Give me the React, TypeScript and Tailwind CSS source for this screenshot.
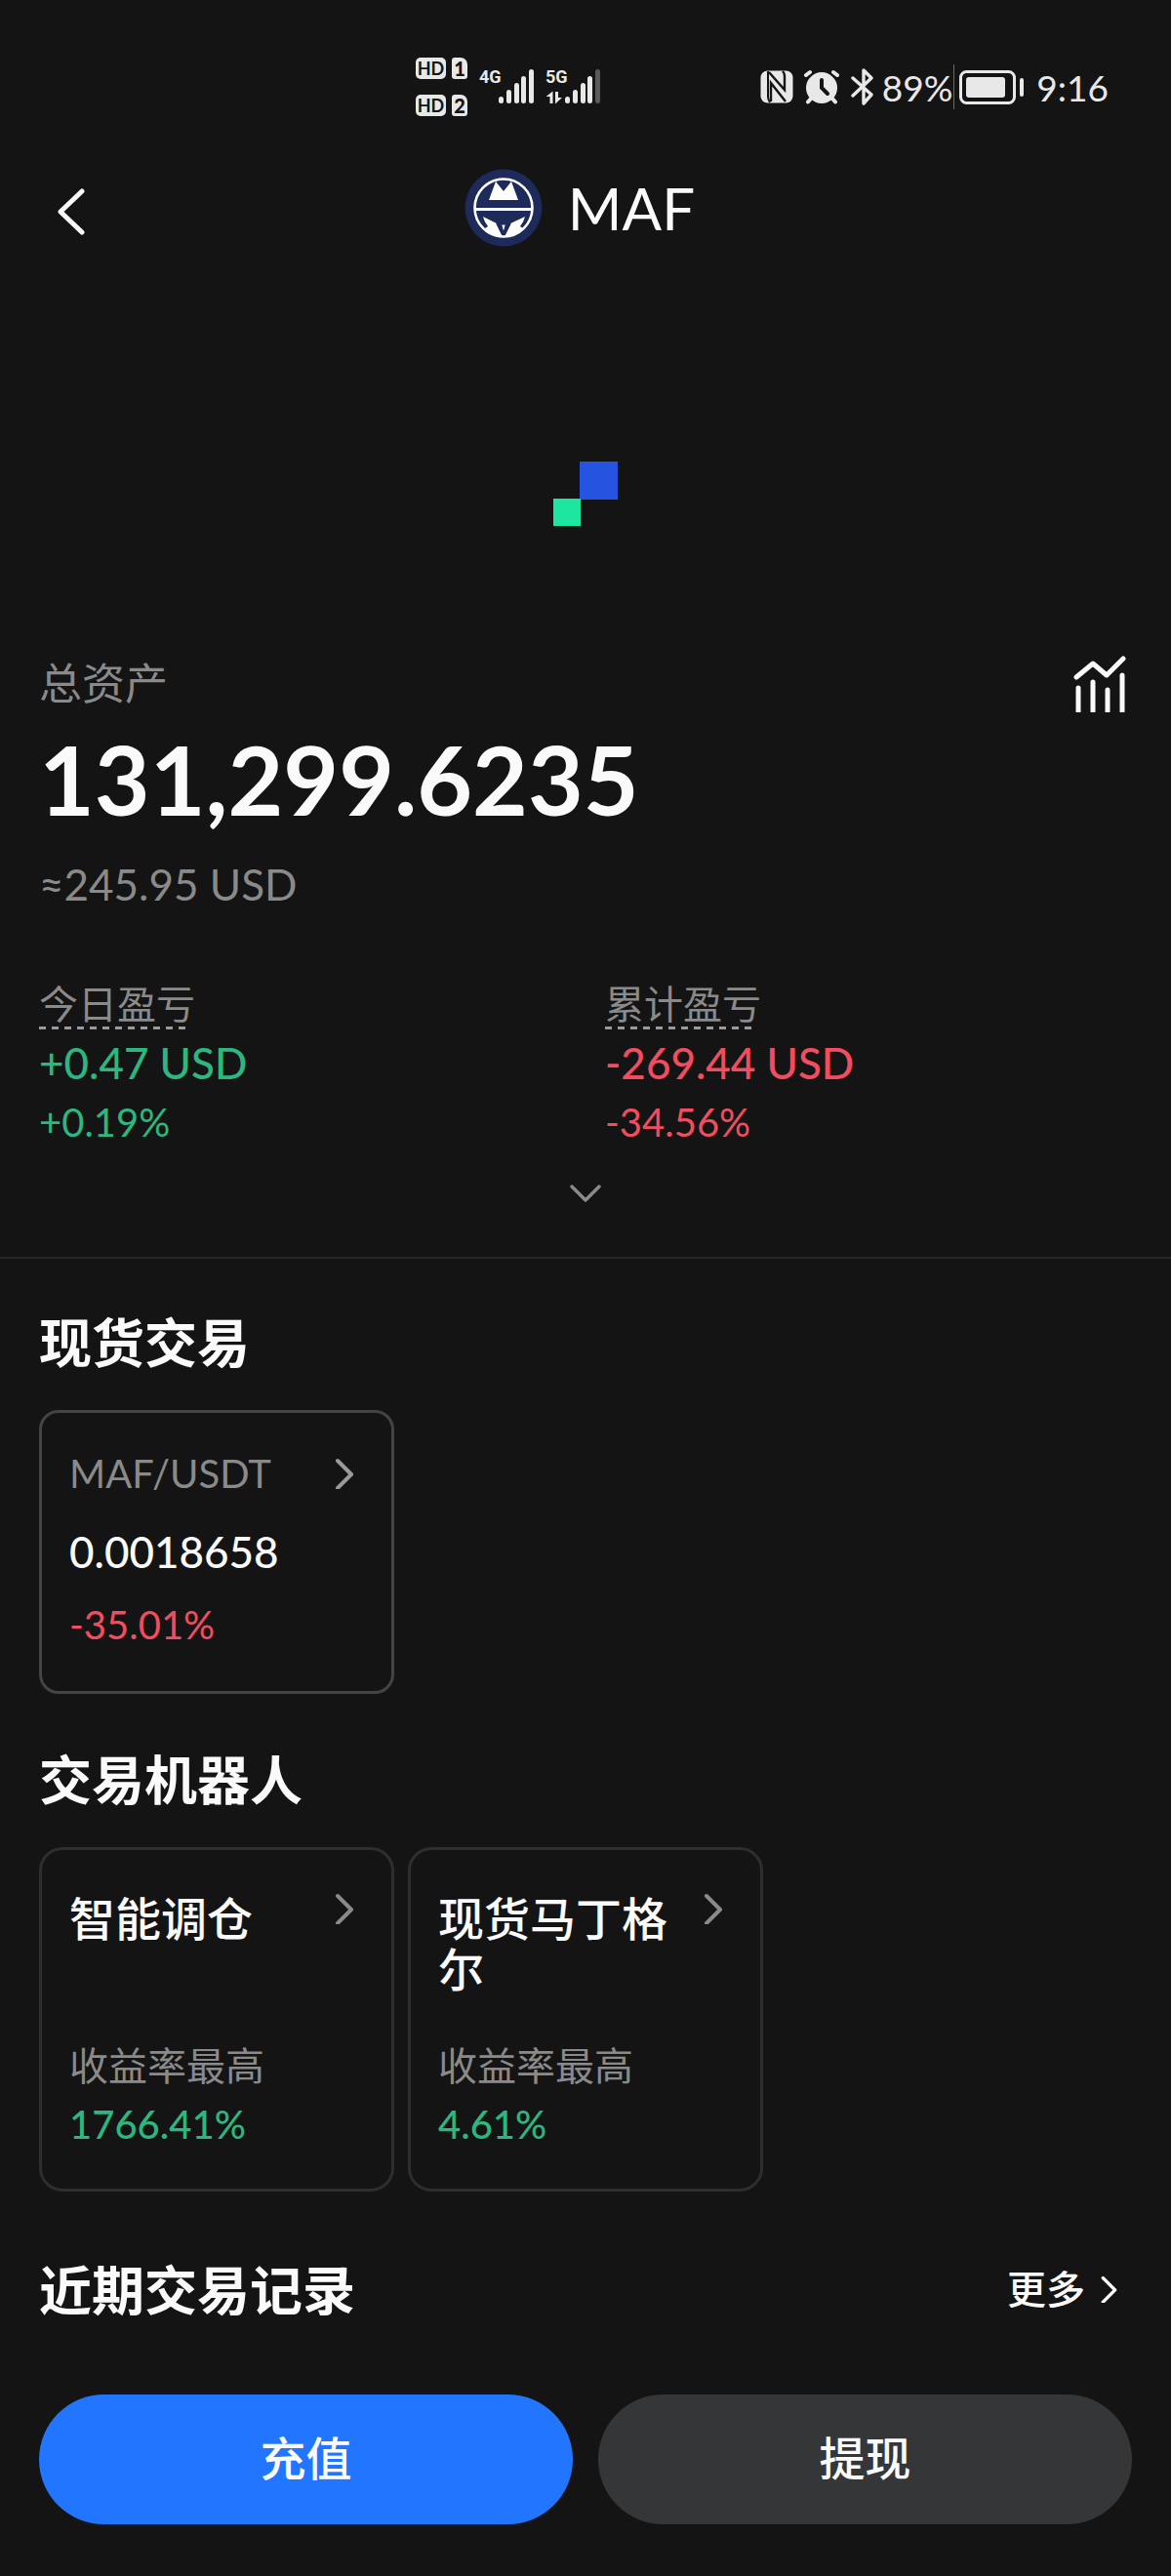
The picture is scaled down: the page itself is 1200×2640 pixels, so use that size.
import clsx from "clsx"

const stats = [
    { label: "今日盈亏", value: "+0.47 USD", percent: "+0.19%", up: true },
    { label: "累计盈亏", value: "-269.44 USD", percent: "-34.56%", up: false },
]

const bots = [
    { name: "智能调仓", label: "收益率最高", rate: "1766.41%" },
    { name: "现货马丁格尔", label: "收益率最高", rate: "4.61%" },
]

function SimBadge({ slot }: { slot: string }) {
    return (
        <div className="flex items-center gap-1.5">
            <span className="flex h-[22px] w-[31px] items-center justify-center rounded-[5px] bg-[#e8e8e8] text-[18px] leading-none font-bold text-[#141414]">
                HD
            </span>
            <span className="flex h-[22px] w-4 items-center justify-center rounded-[3px] rounded-tr-[7px] bg-[#e8e8e8] text-[20px] leading-none font-black text-[#141414]">
                {slot}
            </span>
        </div>
    )
}

function SignalBars({ weak = false }: { weak?: boolean }) {
    return (
        <svg className="h-9 w-9" viewBox="0 0 36 36" fill="#e8e8e8" aria-hidden="true">
            <rect x="0" y="28" width="5" height="7" rx="2.5" />
            <rect x="8" y="21" width="5" height="14" rx="2.5" />
            <rect x="16" y="14" width="5" height="21" rx="2.5" />
            <rect x="23" y="7" width="5" height="28" rx="2.5" />
            <rect x="31" y="0" width="5" height="35" rx="2.5" fill={weak ? "#5a5a5a" : "#e8e8e8"} />
        </svg>
    )
}

function StatusBar() {
    return (
        <div className="flex h-[130px] items-center justify-between pt-12 pr-16 pl-[426px] text-[#e8e8e8]">
            <div className="flex items-center">
                <div className="flex flex-col gap-4">
                    <SimBadge slot="1" />
                    <SimBadge slot="2" />
                </div>
                <div className="ml-3 flex h-9 items-start">
                    <span className="w-5 font-['Liberation_Sans_Narrow',Roboto,sans-serif] text-[18px] leading-4 font-bold">4G</span>
                    <SignalBars />
                </div>
                <div className="ml-3 flex h-9 items-start">
                    <div className="flex w-5 flex-col gap-1.5">
                        <span className="font-['Liberation_Sans_Narrow',Roboto,sans-serif] text-[18px] leading-4 font-bold">5G</span>
                        <svg className="h-3.5 w-[18px]" viewBox="0 0 18 14" fill="#e8e8e8" aria-hidden="true">
                            <path d="M7.5 0.5V13H4.5V6H0.5Z" />
                            <path d="M10 13.5V1H13V7H17Z" />
                        </svg>
                    </div>
                    <SignalBars weak />
                </div>
            </div>

            <div className="flex items-center">
                <svg className="h-[34px] w-[34px]" viewBox="0 0 34 34" aria-hidden="true">
                    <rect x="0.5" y="0.5" width="33" height="33" rx="7" fill="#e8e8e8" />
                    <path d="M8 1V27Q8 30 10 33" fill="none" stroke="#141414" strokeWidth="2" />
                    <path d="M9 2L25 20V6Q25 3 23 1" fill="none" stroke="#141414" strokeWidth="2.4" />
                    <path d="M11 32V13L26 32" fill="none" stroke="#141414" strokeWidth="2.4" />
                </svg>
                <svg className="ml-[11px] h-9 w-9" viewBox="0 0 36 36" fill="none" strokeLinecap="round" aria-hidden="true">
                    <circle cx="18" cy="19" r="16" fill="#e8e8e8" />
                    <path d="M0 8L8 0M36 8L28 0" stroke="#141414" strokeWidth="9" strokeLinecap="butt" />
                    <path d="M2 6L6 3M34 6L30 3M7 30L4 33.5M29 30L32 33.5" stroke="#e8e8e8" strokeWidth="4" />
                    <path d="M18 11V19L24 25" stroke="#141414" strokeWidth="4" />
                </svg>
                <svg className="ml-3 h-[38px] w-6" viewBox="0 0 24 38" fill="none" stroke="#e8e8e8" strokeWidth="3.4" strokeLinecap="round" strokeLinejoin="round" aria-hidden="true">
                    <path d="M2 10L21 27L13 36V2L21 10L2 28" />
                </svg>
                <span className="ml-2 text-[37px] leading-none">89%</span>
                <svg className="h-[46px] w-[74px]" viewBox="0 0 74 46" aria-hidden="true">
                    <path d="M1.5 0V46" stroke="#6a6a6a" />
                    <rect x="8.5" y="7.5" width="55" height="32" rx="6" fill="none" stroke="#e8e8e8" strokeWidth="3" />
                    <rect x="14" y="13" width="40" height="21" rx="3" fill="#e8e8e8" />
                    <rect x="69" y="14" width="4" height="19" rx="2" fill="#e8e8e8" />
                </svg>
                <span className="ml-3 text-[37px] leading-none">9:16</span>
            </div>
        </div>
    )
}

function MafLogo() {
    return (
        <svg className="h-20 w-20" viewBox="0 0 80 80" aria-hidden="true">
            <circle cx="40" cy="40" r="39.5" fill="#1e2a5a" />
            <circle cx="40" cy="40" r="29.5" fill="none" stroke="#fff" strokeWidth="2.6" />
            <path d="M11 41.5H69" stroke="#fff" strokeWidth="3" />
            <path d="M25 32L32 13L40 23L48 13L55 32Z" fill="#fff" />
            <path d="M19 49L33 56L39 69H41L47 56L62 49Q61 54 57 59L60 61Q52 70 40 70Q28 70 21 61L24 59Q20 54 19 49Z" fill="#fff" />
            <path d="M33 56L39 68M47 56L41 68" stroke="#1e2a5a" strokeWidth="1.6" />
            <path d="M37.500 57H42.500L40 66Z" fill="#fff" stroke="#1e2a5a" strokeWidth="1.2" />
        </svg>
    )
}

function ChevronRight({ className = "h-8 w-8" }: { className?: string }) {
    return (
        <svg className={clsx("shrink-0", className)} viewBox="0 0 32 32" fill="none" stroke="currentColor" strokeWidth="4" strokeLinecap="round" strokeLinejoin="round" aria-hidden="true">
            <path d="M5 3L19 17L5 31" />
        </svg>
    )
}

export default function App() {
    return (
        <main className="min-h-screen bg-[#141414] font-[Lato,'Noto_Sans_CJK_SC',sans-serif] text-[#fafafa]" lang="zh-CN">
            <StatusBar />

            <header className="grid h-[166px] grid-cols-[1fr_auto_1fr] items-center px-10">
                <button aria-label="返回" className="flex h-20 w-20 items-center pt-2 pl-[18px]">
                    <svg className="h-12 w-8" viewBox="0 0 32 48" fill="none" stroke="currentColor" strokeWidth="5" strokeLinecap="round" strokeLinejoin="round">
                        <path d="M26 3L4 24L26 45" />
                    </svg>
                </button>
                <div className="flex items-center gap-[26px] pr-3">
                    <MafLogo />
                    <h1 className="text-[60px] leading-[72px]">MAF</h1>
                </div>
            </header>

            {/* Refresh indicator */}
            <div className="flex justify-center pt-[177px] pb-[131px]">
                <svg className="h-[66px] w-[66px]" viewBox="0 0 66 66" aria-hidden="true">
                    <rect x="27" y="0" width="39" height="39" fill="#2454e0" />
                    <rect x="0" y="38" width="28" height="28" fill="#1ce6a0" />
                </svg>
            </div>

            <section className="border-b-2 border-[#262626] px-10 pb-[22px]">
                <div className="flex items-center justify-between">
                    <h2 className="text-[44px] leading-[60px] text-[#8a8a8a]">总资产</h2>
                    <button aria-label="资产走势" className="h-[60px] w-[60px]">
                        <svg className="h-[60px] w-[60px]" viewBox="0 0 60 60" fill="none" stroke="currentColor" strokeWidth="5" strokeLinecap="round" strokeLinejoin="round">
                            <path d="M3 24L20 10L34 22L51 5" />
                            <path d="M5 35V59M20 29V59M35 37V59M50 22V59" />
                        </svg>
                    </button>
                </div>
                <p className="mt-2 text-[98px] leading-[120px] font-bold">131,299.6235</p>
                <p className="mt-[18px] text-[44px] leading-[60px] text-[#8a8a8a]">≈245.95 USD</p>

                <div className="mt-[71px] grid grid-cols-2 gap-10">
                    {stats.map((stat) => (
                        <div key={stat.label} className={stat.up ? "text-[#2db67f]" : "text-[#f04e60]"}>
                            <div className="w-fit">
                                <h3 className="text-[40px] leading-[45px] text-[#8a8a8a]">{stat.label}</h3>
                                <div className="mr-2 h-[3px] bg-[repeating-linear-gradient(90deg,#9a9a9a_0_7px,transparent_7px_13px)]" />
                            </div>
                            <p className="mt-1 font-['Lato_Medium',Lato,sans-serif] text-[44px] leading-[60px] font-medium">{stat.value}</p>
                            <p className="mt-px text-[40px] leading-[60px]">{stat.percent}</p>
                        </div>
                    ))}
                </div>

                <button aria-label="展开" className="flex h-[86px] w-full items-center justify-center text-[#8a8a8a]">
                    <svg className="h-5 w-9" viewBox="0 0 36 20" fill="none" stroke="currentColor" strokeWidth="3.500" strokeLinecap="round" strokeLinejoin="round">
                        <path d="M4 3L18 17L32 3" />
                    </svg>
                </button>
            </section>

            <section className="px-10 pt-[55px]">
                <h2 className="text-[54px] leading-[64px] font-bold">现货交易</h2>
                <a href="#spot" className="mt-9 block w-[364px] rounded-[20px] border-[3px] border-[#444] px-7 pt-8 pb-[38px]">
                    <div className="flex items-center justify-between">
                        <span className="text-[40px] leading-[60px] text-[#8a8a8a]">MAF/USDT</span>
                        <span className="text-[#9a9a9a]">
                            <ChevronRight />
                        </span>
                    </div>
                    <p className="mt-5 font-['Lato_Medium',Lato,sans-serif] text-[44px] leading-[60px] font-medium">0.0018658</p>
                    <p className="mt-[15px] text-[40px] leading-[60px] text-[#f04e60]">-35.01%</p>
                </a>
            </section>

            <section className="px-10 pt-[57px]">
                <h2 className="text-[54px] leading-[64px] font-bold">交易机器人</h2>
                <div className="mt-9 flex gap-3.5">
                    {bots.map((bot) => (
                        <a key={bot.name} href="#bots" className="w-[364px] rounded-[24px] border-[3px] border-[#2e2e2e] px-7 pt-11 pb-9">
                            <div className="flex min-h-[104px] items-start">
                                <h3 className="flex-1 text-[47px] leading-[52px] font-medium">{bot.name}</h3>
                                <span className="text-[#8a8a8a]">
                                    <ChevronRight />
                                </span>
                            </div>
                            <p className="mt-[43px] text-[40px] leading-[60px] text-[#8a8a8a]">{bot.label}</p>
                            <p className="font-['Lato_Medium',Lato,sans-serif] text-[40px] leading-[60px] font-medium text-[#2db67f]">{bot.rate}</p>
                        </a>
                    ))}
                </div>
            </section>

            <section className="flex items-center justify-between px-10 pt-[70px]">
                <h2 className="text-[54px] leading-[64px] font-bold">近期交易记录</h2>
                <a href="#records" className="flex items-center gap-3.5 pr-1.5 pb-1 text-[40px] leading-[60px] font-medium">
                    更多
                    <ChevronRight className="h-7 w-7" />
                </a>
            </section>

            <footer className="grid grid-cols-2 gap-[26px] px-10 pt-[74px] pb-[52px] text-[47px] leading-[60px] font-medium">
                <button className="h-[133px] rounded-full bg-[#2175ff] pb-1">充值</button>
                <button className="h-[133px] rounded-full bg-[#353638] pb-1">提现</button>
            </footer>
        </main>
    )
}
